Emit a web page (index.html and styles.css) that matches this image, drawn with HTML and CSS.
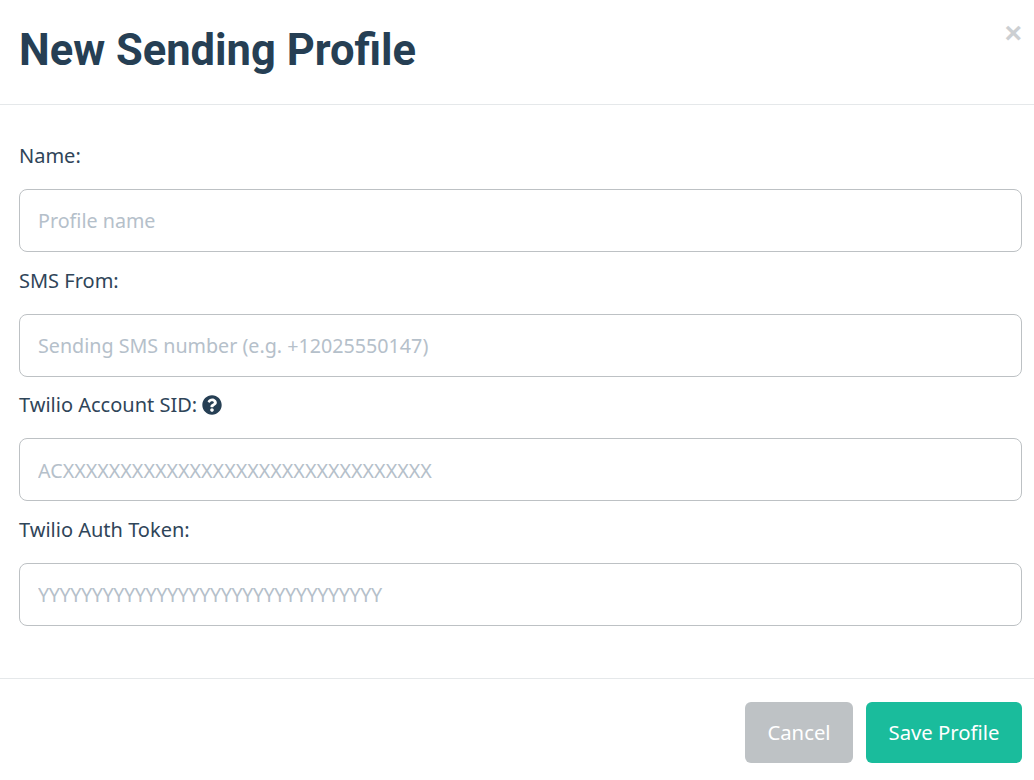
FILE: index.html
```html
<!DOCTYPE html>
<html>
<head>
    <title>New Sending Profile</title>
    <link rel="stylesheet" href="styles.css">
</head>
<body>
    <div class="modal">
        <div class="modal-header">
            <h1>New Sending Profile</h1>
            <button class="close" type="button">×</button>
        </div>
        <form class="modal-body">
            <label class="form-label" for="name">Name:</label>
            <input class="form-input" id="name" type="text" placeholder="Profile name">
            <label class="form-label" for="sms">SMS From:</label>
            <input class="form-input" id="sms" type="text" placeholder="Sending SMS number (e.g. +12025550147)">
            <label class="form-label" for="sid">Twilio Account SID:
                <svg class="help-icon" viewBox="0 0 512 512"><path d="M504 256c0 137-111 248-248 248S8 393 8 256 119 8 256 8s248 111 248 248zM262.700 90c-54.500 0-89.300 23-116.600 63.800-3.500 5.300-2.400 12.400 2.700 16.300l34.700 26.300c5.200 3.900 12.600 3 16.700-2.100 17.900-22.700 30.100-35.800 57.300-35.800 20.400 0 45.700 13.100 45.700 32.900 0 15-12.400 22.700-32.500 34-23.500 13.200-54.600 29.600-54.600 70.600V300c0 6.600 5.400 12 12 12h56c6.600 0 12-5.400 12-12v-1.300c0-28.400 83-29.600 83-106.700 0-58-60.200-102-116.400-102zM256 338c-25.400 0-46 20.600-46 46 0 25.400 20.600 46 46 46s46-20.600 46-46c0-25.400-20.600-46-46-46z"/></svg>
            </label>
            <input class="form-input" id="sid" type="text" placeholder="ACXXXXXXXXXXXXXXXXXXXXXXXXXXXXXXXX">
            <label class="form-label" for="token">Twilio Auth Token:</label>
            <input class="form-input token-input" id="token" type="text" placeholder="YYYYYYYYYYYYYYYYYYYYYYYYYYYYYYYY">
        </form>
        <div class="modal-footer">
            <button class="btn btn-cancel" type="button">Cancel</button>
            <button class="btn btn-save" type="button">Save Profile</button>
        </div>
    </div>
</body>
</html>
```

FILE: styles.css
```css
html, body {
    margin: 0;
    padding: 0;
    background: #fff;
}

body {
    font-family: "Noto Sans", "Liberation Sans", sans-serif;
    color: #2f4559;
}

.modal {
    display: flex;
    flex-direction: column;
    height: 780px;
}

.modal-header {
    position: relative;
    height: 105px;
    box-sizing: border-box;
    padding: 0 19px;
    border-bottom: 1px solid #e5e8ea;
}

.modal-header h1 {
    margin: 0;
    padding-top: 24px;
    font-family: "Roboto", sans-serif;
    font-size: 43.500px;
    font-weight: 700;
    line-height: 53px;
    color: #263f54;
}

.close {
    position: absolute;
    top: 18px;
    right: 12px;
    padding: 0;
    border: none;
    background: none;
    font-family: "Liberation Sans", sans-serif;
    font-size: 30px;
    font-weight: 700;
    line-height: 30px;
    color: #cccfd2;
}

.modal-body {
    display: flex;
    flex-direction: column;
    padding: 22.300px 12px 0 19px;
    height: 573px;
    box-sizing: border-box;
}

.form-label {
    display: flex;
    align-items: center;
    gap: 5px;
    height: 61.670px;
    flex: none;
    padding-bottom: 5px;
    box-sizing: border-box;
    font-size: 20px;
}

.help-icon {
    width: 20px;
    height: 20px;
    fill: #263f54;
}

.form-input {
    display: block;
    flex: none;
    height: 63px;
    box-sizing: border-box;
    padding: 1px 18px 0;
    border: 1px solid #bdc1c4;
    border-radius: 8px;
    font-family: inherit;
    font-size: 19.700px;
    color: #2f4559;
}

.form-input::placeholder {
    color: #b5c0ca;
    opacity: 1;
}

.token-input::placeholder {
    letter-spacing: -0.400px;
}

.modal-footer {
    display: flex;
    justify-content: flex-end;
    gap: 13px;
    padding: 23px 12px 0 0;
    border-top: 1px solid #e5e8ea;
}

.btn {
    height: 61px;
    padding: 0 0 2px;
    border: none;
    border-radius: 6px;
    font-family: inherit;
    font-size: 20.300px;
    color: #fff;
}

.btn-cancel {
    width: 108px;
    background: #bec2c5;
}

.btn-save {
    width: 156px;
    background: #1abc9c;
}
```
